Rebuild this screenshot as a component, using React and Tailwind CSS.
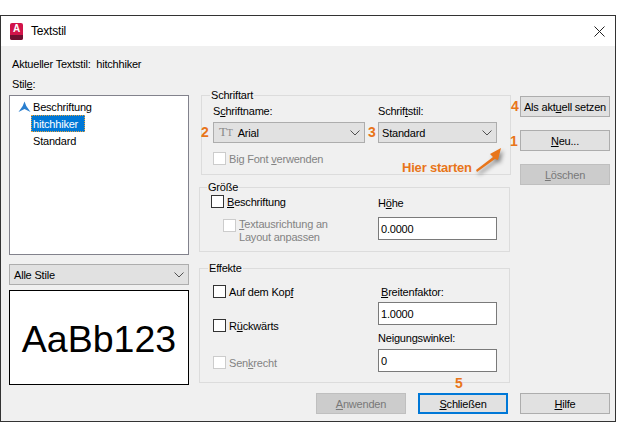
import React from 'react';

const Chevron = () => (
    <svg width="10" height="6" viewBox="0 0 10 6" className="shrink-0">
        <path d="M0.5 0.5 L5 5 L9.5 0.5" fill="none" stroke="#505050" strokeWidth="1" />
    </svg>
);

const Select = ({ width, height, children, className = '' }) => (
    <div className={`flex items-center justify-between bg-[#e1e1e1] border border-[#adadad] pr-[4px] ${width} ${height} ${className}`}>
        <div className="flex items-center min-w-0">{children}</div>
        <Chevron />
    </div>
);

const Check = ({ disabled, children, className = '' }) => (
    <div className={`flex items-center h-[13px] ${className}`}>
        <div className={`w-[13px] h-[13px] shrink-0 bg-white border ${disabled ? 'border-[#cccccc]' : 'border-[#333333]'}`} />
        <span className={`ml-[3px] whitespace-nowrap ${disabled ? 'text-[#838383]' : 'text-black'}`}>{children}</span>
    </div>
);

const Button = ({ children, disabled, focused }) => (
    <div
        className={`flex items-center justify-center w-[90px] h-[21px] ${
            focused
                ? 'bg-[#e1e1e1] border-2 border-[#0078d7] text-black'
                : disabled
                ? 'bg-[#cccccc] border border-[#bfbfbf] text-[#787878]'
                : 'bg-[#e1e1e1] border border-[#adadad] text-black'
        }`}
    >
        <span>{children}</span>
    </div>
);

const Group = ({ title, legendClass, className, children }) => (
    <fieldset className={`border border-[#dcdcdc] min-w-0 ${className}`}>
        <legend className={`h-[14px] leading-[14px] px-[1px] ${legendClass}`}>{title}</legend>
        {children}
    </fieldset>
);

const Input = ({ value }) => (
    <div className="flex items-center w-[119px] h-[23px] bg-white border border-[#7a7a7a] pl-[2px] text-black">{value}</div>
);

const Num = ({ className, children }) => (
    <span className={`absolute text-[14px] leading-[16px] font-bold text-[#e8751a] ${className}`}>{children}</span>
);

const App = () => {
    return (
        <div className="w-[621px] h-[436px] bg-white pt-[15px] text-[11px] tracking-[-0.2px] leading-[16px] text-black font-['Liberation_Sans',sans-serif]">
            <div className="w-[616px] h-[407px] border border-[#333333] flex flex-col">
                {/* title bar */}
                <div className="h-[30px] shrink-0 bg-white flex items-center pl-[9px] pr-[9px]">
                    <div className="w-[13px] h-[22px] flex items-center">
                        <div className="relative w-[13px] h-[17px] rounded-[2px] bg-[#d1144a] overflow-hidden flex justify-center">
                            <span className="text-white font-bold text-[10px] leading-[12px]">A</span>
                            <div className="absolute bottom-0 left-0 right-0 h-[5px] bg-[#6e1030]" />
                        </div>
                    </div>
                    <span className="ml-[8px] text-[12px]">Textstil</span>
                    <svg width="11" height="11" viewBox="0 0 11 11" className="ml-auto mr-[1px]">
                        <path d="M0.5 0.5 L10.5 10.5 M10.5 0.5 L0.5 10.5" stroke="#222222" strokeWidth="1" />
                    </svg>
                </div>

                {/* dialog body */}
                <div className="relative flex-1 bg-[#f0f0f0] pl-[8px] pr-[5px] pt-[10px]">
                    <div className="flex">
                        {/* styles column */}
                        <div className="w-[180px] shrink-0">
                            <div className="h-[16px] pl-[3px] whitespace-pre">Aktueller Textstil:  hitchhiker</div>
                            <div className="h-[16px] pl-[3px] mt-[4px]">Stil<u>e</u>:</div>
                            <div className="h-[160px] mt-[3px] bg-white border border-[#82828c] pt-[2px]">
                                <div className="flex items-center h-[17px] pl-[8px]">
                                    <svg width="13" height="12" viewBox="0 0 13 12">
                                        <path d="M6.5 0.5 L8.3 5 L12.5 11 L6.5 8 L0.5 11 L4.7 5 Z" fill="#2b7fcf" />
                                    </svg>
                                    <span className="ml-[2px]">Beschriftung</span>
                                </div>
                                <div className="flex items-center h-[17px] ml-[21px] w-[54px] pl-[2px] bg-[#0078d7] text-white outline-1 outline-dotted outline-[#e8a33d] -outline-offset-1">
                                    hitchhiker
                                </div>
                                <div className="flex items-center h-[17px] pl-[23px]">Standard</div>
                            </div>
                            <Select width="w-[180px]" height="h-[21px]" className="mt-[9px] pl-[4px]">Alle Stile</Select>
                            <div className="h-[95px] mt-[5px] bg-white border border-black flex items-center justify-center text-[37.5px] tracking-normal leading-none text-black pt-[4px]">
                                AaBb123
                            </div>
                        </div>

                        {/* font groups */}
                        <div className="w-[312px] ml-[10px] shrink-0 pt-[32px]">
                            <Group title="Schriftart" legendClass="ml-[8px]" className="ml-[2px] w-[310px] h-[87px]">
                                <div className="flex pl-[11px] pt-[1px]">
                                    <div className="w-[152px]">
                                        <div className="h-[16px]">S<u>c</u>hriftname:</div>
                                        <Select width="w-[152px]" height="h-[21px]" className="mt-[3px] pl-[5px]">
                                            <span className="font-['Liberation_Serif',serif] text-[#8a8a8a] text-[13px] mr-[5px]">T<span className="text-[10px]">T</span></span>
                                            Arial
                                        </Select>
                                    </div>
                                    <div className="w-[119px] ml-[13px]">
                                        <div className="h-[16px]">Schrif<u>t</u>stil:</div>
                                        <Select width="w-[119px]" height="h-[21px]" className="mt-[3px] pl-[3px]">Standard</Select>
                                    </div>
                                </div>
                                <Check disabled className="mt-[9px] ml-[11px]">Big Font <u>v</u>erwenden</Check>
                            </Group>

                            <Group title="Größe" legendClass="ml-[7px]" className="w-[311px] mt-[5px] h-[72px]">
                                <div className="flex pl-[11px] pt-[1px]">
                                    <div className="w-[167px]">
                                        <Check><u>B</u>eschriftung</Check>
                                        <div className="flex mt-[11px] ml-[12px]">
                                            <div className="w-[13px] h-[13px] shrink-0 bg-white border border-[#cccccc]" />
                                            <div className="ml-[3px] -mt-[1px] leading-[13px] text-[#838383]">
                                                <u>T</u>extausrichtung an
                                                <br />
                                                Layout anpassen
                                            </div>
                                        </div>
                                    </div>
                                    <div className="w-[119px]">
                                        <div className="h-[16px] mb-[6px] flex items-center">H<u>ö</u>he</div>
                                        <Input value="0.0000" />
                                    </div>
                                </div>
                            </Group>

                            <Group title="Effekte" legendClass="ml-[8px]" className="w-[311px] mt-[9px] h-[122px]">
                                <div className="flex pl-[13px] pt-[1px]">
                                    <div className="w-[165px] pt-[9px]">
                                        <Check>Auf dem Kop<u>f</u></Check>
                                        <Check className="mt-[21px]">R<u>ü</u>ckwärts</Check>
                                        <Check disabled className="mt-[24px]">Sen<u>k</u>recht</Check>
                                    </div>
                                    <div className="w-[119px] pt-[8px]">
                                        <div className="h-[16px] pl-[3px] mb-[2px]"><u>B</u>reitenfaktor:</div>
                                        <Input value="1.0000" />
                                        <div className="h-[16px] mt-[5px] mb-[3px]">Nei<u>g</u>ungswinkel:</div>
                                        <Input value="0" />
                                    </div>
                                </div>
                            </Group>
                        </div>

                        {/* action buttons */}
                        <div className="w-[90px] ml-[9px] shrink-0 pt-[40px] flex flex-col gap-[13px]">
                            <Button>Als akt<u>u</u>ell setzen</Button>
                            <Button><u>N</u>eu...</Button>
                            <Button disabled><u>L</u>öschen</Button>
                        </div>
                    </div>

                    <div className="flex justify-end gap-[12px] mt-[8px]">
                        <Button disabled><u>A</u>nwenden</Button>
                        <Button focused><u>S</u>chließen</Button>
                        <Button><u>H</u>ilfe</Button>
                    </div>

                    {/* tutorial annotations */}
                    <Num className="left-[200px] top-[78px]">2</Num>
                    <Num className="left-[367px] top-[78px]">3</Num>
                    <Num className="left-[510px] top-[52px]">4</Num>
                    <Num className="left-[509px] top-[87px]">1</Num>
                    <Num className="left-[454px] top-[329px]">5</Num>
                    <span className="absolute left-[401px] top-[114px] text-[13px] tracking-[-0.2px] font-bold text-[#e8751a] whitespace-nowrap">Hier starten</span>
                    <svg width="32" height="30" viewBox="0 0 32 30" className="absolute left-[473px] top-[100px] drop-shadow-[2px_3px_2px_rgba(0,0,0,0.45)]">
                        <path d="M2 24 L19 11 L16 8 L27 2 L24 14 L21 13 L3 26 Z" fill="#e8751a" />
                    </svg>
                </div>
            </div>
        </div>
    );
};

export default App;
